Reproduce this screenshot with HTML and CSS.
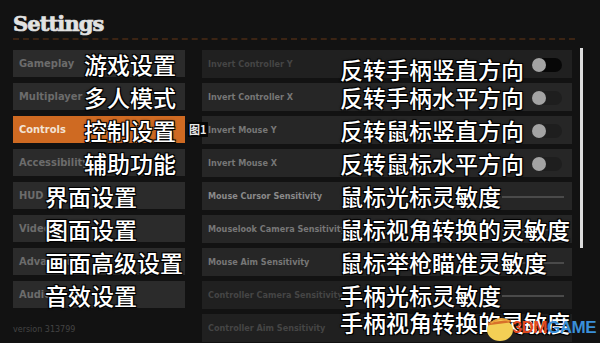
FILE: index.html
```html
<!DOCTYPE html>
<html lang="zh-CN">
<head>
  <meta charset="UTF-8">
  <meta name="viewport" content="width=device-width, initial-scale=1.0">
  <title>Settings</title>
  <link rel="stylesheet" href="styles.css">
</head>
<body>

  <div class="screen">
    <div class="tops">
      <h1>Settings</h1>
    </div>

    <div class="main">
      <div class="menu">
        <div class="menu-item">Gameplay<span class="sub far">游戏设置</span></div>
        <div class="menu-item">Multiplayer<span class="sub far">多人模式</span></div>
        <div class="menu-item active">Controls<span class="sub far">控制设置</span><span class="fig">图1</span></div>
        <div class="menu-item">Accessibility<span class="sub far">辅助功能</span></div>
        <div class="menu-item">HUD<span class="sub">界面设置</span></div>
        <div class="menu-item">Video<span class="sub">图面设置</span></div>
        <div class="menu-item">Advanced<span class="sub">画面高级设置</span></div>
        <div class="menu-item">Audio<span class="sub">音效设置</span></div>
        <i class="version">version 313799</i>
      </div>

      <div class="options">
        <div class="row dim">Invert Controller Y<span class="sub down">反转手柄竖直方向</span><span class="toggle off"></span></div>
        <div class="row">Invert Controller X<span class="sub">反转手柄水平方向</span><span class="toggle"></span></div>
        <div class="row">Invert Mouse Y<span class="sub">反转鼠标竖直方向</span><span class="toggle"></span></div>
        <div class="row">Invert Mouse X<span class="sub">反转鼠标水平方向</span><span class="toggle"></span></div>
        <div class="row bright">Mouse Cursor Sensitivity<span class="sub">鼠标光标灵敏度</span><span class="slider"></span></div>
        <div class="row">Mouselook Camera Sensitivity<span class="sub">鼠标视角转换的灵敏度</span><span class="slider"></span></div>
        <div class="row">Mouse Aim Sensitivity<span class="sub">鼠标举枪瞄准灵敏度</span><span class="slider"></span></div>
        <div class="row dim">Controller Camera Sensitivity<span class="sub">手柄光标灵敏度</span><span class="slider"></span></div>
        <div class="row dim">Controller Aim Sensitivity<span class="sub up">手柄视角转换的灵敏度</span><span class="slider"></span></div>
      </div>

      <div class="scrollbar"></div>
    </div>

    <div class="mark">
      <svg width="30" height="26" viewBox="0 0 30 26">
        <ellipse cx="15" cy="15" rx="13" ry="11" fill="#f3cf55"/>
        <path d="M3 9 L26 6" stroke="#d8702a" stroke-width="2.5" fill="none"/>
        <path d="M6 8 Q15 1 24 6" stroke="#e9a23a" stroke-width="2" fill="none"/>
      </svg>
      <span class="m3">3DM</span><span class="mg">GAME</span>
    </div>
  </div>

</body>
</html>
```

FILE: styles.css
```css
* {
  margin: 0;
  padding: 0;
  box-sizing: border-box;
}

body {
  background: #121212;
  width: 600px;
  height: 343px;
  overflow: hidden;
  font-family: "DejaVu Sans Condensed", "DejaVu Sans", sans-serif;
}

.screen {
  position: relative;
  width: 600px;
  height: 343px;
}

.tops {
  margin: 0 25px 0 13px;
  height: 40px;
  padding-top: 12px;
  border-bottom: 2px dashed #3b2414;
}

.tops h1 {
  font-family: "DejaVu Serif", serif;
  font-weight: bold;
  font-size: 21px;
  line-height: 24px;
  letter-spacing: -0.9px;
  color: #e2e2e2;
  -webkit-text-stroke: 0.7px #e2e2e2;
}

.main {
  display: flex;
  align-items: flex-start;
  padding: 10px 0 0 13px;
}

.menu {
  width: 172px;
  display: flex;
  flex-direction: column;
  gap: 6px;
}

.menu-item {
  position: relative;
  height: 27px;
  background: #2b2b2b;
  color: #6c6c6c;
  font-weight: bold;
  font-size: 11px;
  line-height: 27px;
  padding-left: 6px;
}

.menu-item.active {
  background: #cf6a22;
  color: #f3e2d4;
}

.version {
  font-style: normal;
  font-size: 8px;
  color: #444;
  margin-top: 11px;
  font-family: "DejaVu Sans", sans-serif;
}

.sub {
  position: absolute;
  top: 50%;
  transform: translateY(-46%);
  left: 32px;
  white-space: nowrap;
  font-family: "Noto Sans CJK SC", sans-serif;
  font-weight: 500;
  font-size: 23px;
  line-height: 1;
  color: #fff;
  text-shadow: 1px 1px 0 #000, -1px -1px 0 #000, 1px -1px 0 #000, -1px 1px 0 #000, 0 0 3px #000;
  z-index: 2;
}

.sub.far {
  left: 71px;
}

.row .sub {
  left: 138px;
}

.row .sub.down {
  transform: translateY(-28%);
}

.row .sub.up {
  transform: translateY(-72%);
}

.fig {
  position: absolute;
  left: 175px;
  top: 6px;
  height: 15px;
  line-height: 15px;
  padding: 0 1px;
  white-space: nowrap;
  background: #050505;
  color: #e8e8e8;
  font-family: "Noto Sans CJK SC", sans-serif;
  font-size: 11px;
  font-weight: bold;
  z-index: 3;
}

.options {
  width: 370px;
  margin-left: 17px;
  display: flex;
  flex-direction: column;
  gap: 5px;
}

.row {
  position: relative;
  height: 28px;
  background: #262626;
  color: #777;
  font-weight: bold;
  font-size: 9px;
  line-height: 28px;
  padding-left: 6px;
}

.row.dim {
  background: #202020;
  color: #454545;
}

.row.bright {
  color: #8a8a8a;
}

.toggle {
  position: absolute;
  right: 10px;
  top: 8px;
  width: 30px;
  height: 14px;
  border-radius: 7px;
  background: #1e1e1e;
}

.toggle.off {
  background: #070707;
}

.toggle::before {
  content: "";
  position: absolute;
  left: 0;
  top: 0;
  width: 14px;
  height: 14px;
  border-radius: 50%;
  background: #a3a3a3;
}

.slider {
  position: absolute;
  right: 8px;
  top: 14px;
  width: 62px;
  height: 2px;
  background: #4a4a4a;
}

.scrollbar {
  width: 3px;
  height: 200px;
  margin-left: 8px;
  margin-top: -2px;
  background: #dcdcdc;
}

.mark {
  position: absolute;
  right: 4px;
  bottom: 2px;
  display: flex;
  align-items: center;
  font-family: "Liberation Sans", sans-serif;
  font-weight: bold;
  font-size: 17px;
  letter-spacing: -0.5px;
  z-index: 5;
}

.mark svg {
  margin-right: -2px;
}

.m3 {
  color: #e2481d;
}

.mg {
  color: #3a8fd8;
}
```
